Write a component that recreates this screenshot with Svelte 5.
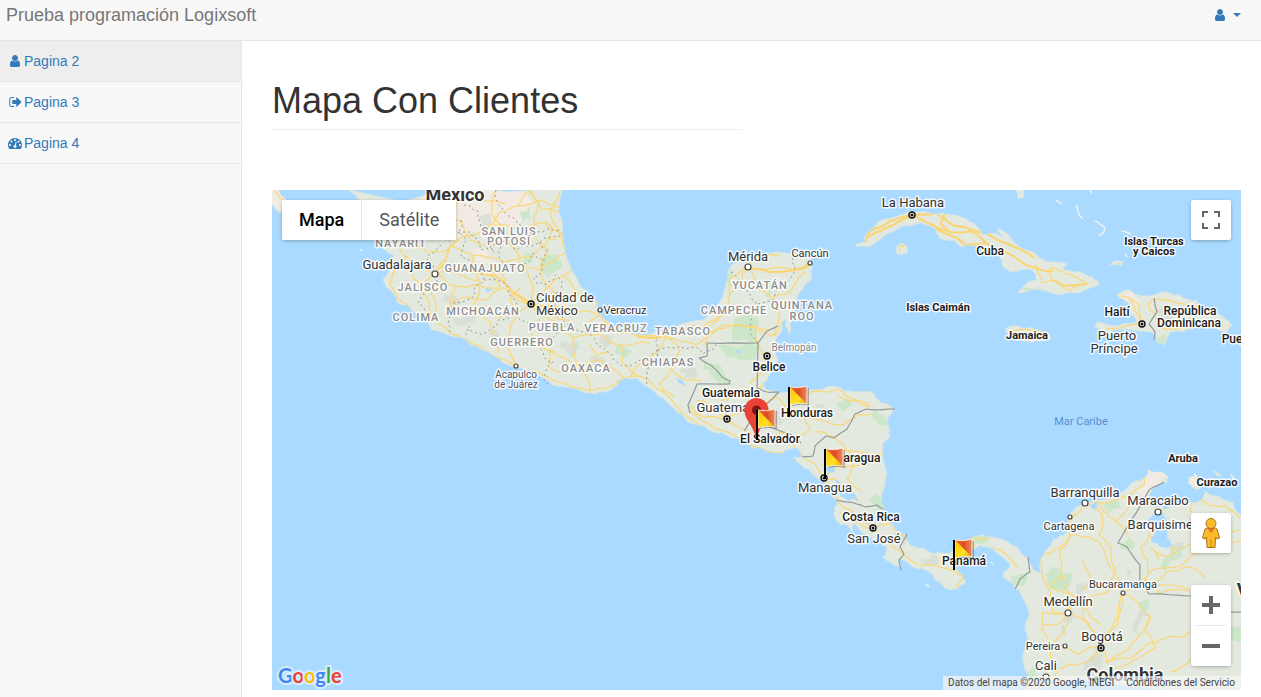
<script>
  const icons = {
    user: { box: '0 0 1280 1536', w: 10, h: 12, d: 'M1280 1271q0 109-62.5 187t-150.5 78h-854q-88 0-150.5-78t-62.5-187q0-85 8.5-160.5t31.5-152 58.5-131 94-89 134.5-34.5q131 128 313 128t313-128q76 0 134.5 34.5t94 89 58.5 131 31.5 152 8.5 160.5zm-256-887q0 159-112.5 271.5t-271.5 112.5-271.5-112.5-112.5-271.5 112.5-271.5 271.5-112.5 271.5 112.5 112.5 271.5z' },
    exit: { box: '0 128 1600 1536', w: 13, h: 12, d: 'M640 1440q0 4 1 20t.5 26.5-3 23.5-10 19.5-20.5 6.5h-320q-119 0-203.5-84.5t-84.5-203.5v-704q0-119 84.5-203.5t203.5-84.5h320q13 0 22.5 9.5t9.5 22.5q0 4 1 20t.5 26.5-3 23.5-10 19.5-20.5 6.5h-320q-66 0-113 47t-47 113v704q0 66 47 113t113 47h312l11.5 1 11.5 3 8 5.5 7 9 2 13.5zm928-544q0 26-19 45l-544 544q-19 19-45 19t-45-19-19-45v-288h-448q-26 0-45-19t-19-45v-384q0-26 19-45t45-19h448v-288q0-26 19-45t45-19 45 19l544 544q19 19 19 45z' },
    gauge: { box: '0 256 1792 1408', w: 14, h: 11, d: 'M384 1152q0-53-37.5-90.5t-90.5-37.5-90.5 37.5-37.5 90.5 37.5 90.5 90.5 37.5 90.5-37.5 37.5-90.5zm192-448q0-53-37.5-90.5t-90.5-37.5-90.5 37.5-37.5 90.5 37.5 90.5 90.5 37.5 90.5-37.5 37.5-90.5zm428 481l101-382q6-26-7.5-48.5t-38.5-29.5-48 6.5-30 39.5l-101 382q-60 5-107 43.5t-63 98.5q-20 77 20 146t117 89 146-20 89-117q16-60-6-117t-72-91zm660-33q0-53-37.5-90.5t-90.5-37.5-90.5 37.5-37.5 90.5 37.5 90.5 90.5 37.5 90.5-37.5 37.5-90.5zm-640-640q0-53-37.5-90.5t-90.5-37.5-90.5 37.5-37.5 90.5 37.5 90.5 90.5 37.5 90.5-37.5 37.5-90.5zm448 192q0-53-37.5-90.5t-90.5-37.5-90.5 37.5-37.5 90.5 37.5 90.5 90.5 37.5 90.5-37.5 37.5-90.5zm320 448q0 261-141 483-19 29-54 29h-1402q-35 0-54-29-141-221-141-483 0-182 71-348t191-286 286-191 348-71 348 71 286 191 191 286 71 348z' }
  };

  const pages = [
    { name: 'Pagina 2', icon: icons.user, active: true },
    { name: 'Pagina 3', icon: icons.exit, active: false },
    { name: 'Pagina 4', icon: icons.gauge, active: false }
  ];

  // Repeatable noise so that lines wander the same way on every load.
  function noise(x, y) {
    const n = Math.sin(x * 12.9898 + y * 78.233) * 43758.5453;
    return (n - Math.floor(n)) * 2 - 1;
  }

  // Turns "x,y x,y ..." into a path whose segments are roughened by midpoint shifts.
  function rough(source, amount, closed) {
    let pts = source.trim().split(/\s+/).map((p) => p.split(',').map(Number));
    if (closed) pts.push(pts[0]);
    for (let pass = 0; pass < 2; pass++) {
      const next = [pts[0]];
      for (let i = 1; i < pts.length; i++) {
        const [ax, ay] = pts[i - 1];
        const [bx, by] = pts[i];
        const len = Math.hypot(bx - ax, by - ay);
        if (len > 5) {
          const shift = noise(ax + bx, ay + by) * amount * len;
          next.push([(ax + bx) / 2 - ((by - ay) / len) * shift, (ay + by) / 2 + ((bx - ax) / len) * shift]);
        }
        next.push([bx, by]);
      }
      pts = next;
    }
    return 'M' + pts.map(([x, y]) => x.toFixed(1) + ' ' + y.toFixed(1)).join('L') + (closed ? 'Z' : '');
  }

  const land = [
    '349,190 360,202 366,220 372,240 385,250 394,255 389,272 383,280 387,288 397,302 415,313 427,320 432,330 449,335 465,339 479,348 499,358 520,368 543,378 553,385 572,388 587,393 603,392 617,385 625,378 637,378 648,387 663,398 677,412 690,423 717,433 737,438 753,448 783,453 792,448 798,448 802,457 793,457 803,467 813,475 827,485 833,497 838,502 834,513 837,522 847,525 852,532 854,523 870,537 887,547 883,557 892,563 900,569 898,560 913,567 930,572 935,580 945,588 957,589 966,582 957,570 953,562 960,555 973,550 980,545 993,548 1003,557 1010,567 1003,577 1015,588 1027,607 1025,627 1028,640 1023,660 1030,677 1026,692 1243,692 1243,518 1233,502 1220,497 1207,492 1197,490 1188,483 1189,477 1196,475 1200,485 1200,492 1183,500 1167,507 1153,507 1148,500 1152,490 1167,482 1168,477 1162,472 1148,470 1143,480 1123,492 1113,497 1097,500 1083,503 1072,512 1068,520 1067,533 1053,540 1046,550 1040,560 1042,573 1033,570 1028,558 1017,547 1003,540 990,537 973,537 962,546 950,553 933,554 923,548 910,545 905,535 893,525 885,515 883,507 882,493 885,467 883,443 890,437 887,420 893,409 880,402 873,393 853,392 837,387 827,387 807,390 788,392 777,393 767,390 763,383 773,370 778,360 775,343 782,330 785,318 789,334 790,313 797,297 807,283 812,267 810,257 793,254 780,252 760,255 740,260 730,267 728,280 723,297 715,310 703,320 680,325 667,329 647,335 630,332 613,325 602,317 597,302 577,278 570,265 565,248 562,235 562,188',
    '270,188 270,202 280,213 290,208 285,198 277,188',
    '855,245 867,247 883,237 900,227 918,223 936,229 940,238 955,240 963,247 977,247 1000,257 1002,265 1010,272 1033,270 1037,280 1027,283 1018,293 1045,291 1070,292 1090,288 1099,285 1092,277 1080,272 1063,270 1067,264 1050,262 1040,258 1027,250 1007,238 983,235 970,222 950,215 918,212 900,215 877,223 867,233 865,242',
    '897,246 902,243 907,247 907,253 897,254',
    '1005,329 1014,326 1030,327 1048,333 1051,338 1040,341 1024,341 1009,336',
    '1117,295 1130,290 1155,295 1180,295 1197,300 1197,305 1213,312 1232,325 1227,332 1200,328 1183,332 1170,332 1165,345 1158,343 1152,332 1133,330 1110,332 1095,327 1097,322 1120,325 1137,322 1130,312 1128,302',
    '808,280 812,277 809,282 806,283',
    '1110,265 1116,261 1123,262 1121,266',
    '1016,189 1023,189 1023,198 1018,198',
    '997,229 1003,231 1012,239 1018,246 1008,239 1000,233',
    '1213,470 1217,472 1221,477 1216,474',
    '1240,338 1243,338 1243,346 1240,346'
  ].map((s) => rough(s, 0.14, true));

  const sand = [
    '420,188 520,188 534,205 520,222 498,228 485,240 470,232 458,240 440,225 420,205',
    '268,188 278,188 284,203 280,212 270,202',
    '1117,295 1130,291 1140,301 1137,310 1120,299',
    '1143,480 1148,470 1162,472 1168,477 1152,488 1144,496 1136,492',
    '470,250 486,248 492,262 478,268',
    '1189,477 1196,475 1199,488 1189,484'
  ].map((s) => rough(s, 0.2, true));

  const parks = [
    '735,318 757,317 758,343 733,342', '718,345 757,345 755,360 738,360 725,354',
    '711,362 722,373 735,384 727,385 712,376', '918,232 938,228 938,239 924,235',
    '1020,290 1040,287 1047,291 1030,293', '1045,575 1055,567 1071,573 1066,590 1047,582',
    '1103,505 1118,499 1123,508 1110,513', '1010,575 1027,572 1025,585 1012,586',
    '868,500 876,494 886,505 876,510', '540,262 556,255 562,268 548,278',
    '524,254 531,253 532,263 523,262', '765,280 772,280 770,298 765,296',
    '872,408 884,417 888,426 876,421', '400,215 412,208 420,220 408,232',
    '1161,564 1185,545 1182,556 1166,571', '1119,545 1128,535 1134,548 1124,550',
    '1216,625 1243,625 1243,644 1216,642', '1139,602 1150,600 1148,610 1140,610',
    '728,275 734,270 733,290 728,284', '974,538 990,537 985,543 975,543',
    '1155,343 1165,333 1165,344', '1027,672 1035,662 1042,682 1030,684',
    '617,345 632,350 626,358 615,354', '705,362 713,372 704,370',
    '1112,264 1121,263 1118,266', '520,212 532,206 532,219 523,221',
    '706,366 716,364 730,380 718,380', '838,402 846,398 852,406 842,412'
  ].map((s) => rough(s, 0.22, true));

  const relief = [
    '440,300 452,295 461,303 452,312', '452,318 466,313 475,321 462,325',
    '489,333 498,329 507,339 500,343', '560,342 578,340 586,350 571,357',
    '590,358 604,354 612,364 601,370', '600,337 610,335 614,344 606,348',
    '478,220 490,214 493,226 482,230', '548,295 557,290 566,300 556,304',
    '765,415 777,409 784,419 773,425', '812,410 824,404 834,412 824,419',
    '861,453 869,446 873,458 865,461', '890,540 902,530 907,541 899,546',
    '920,558 932,554 940,562 928,565', '1060,628 1068,610 1074,615 1066,636',
    '1073,600 1080,582 1086,588 1077,604', '1085,670 1095,649 1104,655 1093,676',
    '1117,585 1126,565 1131,571 1123,590', '1133,630 1145,610 1150,616 1138,635',
    '1163,559 1184,542 1178,555 1168,565', '1188,523 1196,519 1196,527 1189,528',
    '1150,312 1166,303 1178,314 1162,319', '680,370 690,366 695,378 685,378'
  ].map((s) => rough(s, 0.35, true));

  const lakes = [
    '1148,520 1153,515 1162,512 1166,528 1172,545 1160,547 1151,541 1155,530',
    '831,478 844,486 855,494 859,501 847,500 838,490', '824,466 832,464 835,471 828,473',
    '1090,505 1096,500 1098,508 1092,509', '675,377 686,386 679,383',
    '485,289 493,290 488,293', '736,350 742,352 738,354',
    '1200,489 1206,492 1200,500 1180,505 1167,509 1155,508 1170,503'
  ].map((s) => rough(s, 0.2, true));

  const roads = [
    '349,190 378,220 398,243 408,258 435,274 470,269 503,274 531,305',
    '435,274 420,290 432,318 450,333 481,347 516,367 555,381 590,391 620,380 640,376 670,398 700,425 750,445 790,450',
    '435,274 450,246 445,222 460,190', '435,274 456,240 490,225 520,228 545,222 562,236',
    '408,256 395,270 390,285 412,310', '412,276 430,290 436,312 428,321',
    '450,246 472,255 503,262 531,258 548,240 561,235', '472,255 480,280 474,303 490,322 499,353',
    '435,274 452,286 478,284 504,288 531,305 560,306 576,312 598,314',
    '531,305 512,322 508,345 516,365', '531,305 532,284 520,262 505,240 492,214 496,190',
    '531,305 546,289 563,276 573,270', '546,289 540,269 548,250 533,232 538,205 529,190',
    '561,235 550,213 560,191', '562,235 572,268 596,302 603,320 640,338 667,337 702,328 726,308 729,280 748,267',
    '531,305 555,322 573,338 577,365 590,391', '573,338 600,334 622,345 650,343',
    '577,365 550,351 530,340 512,338', '577,365 600,360 618,372 625,378',
    '622,345 622,362 640,376', '667,337 657,352 638,365 630,377', '667,337 680,350 672,368 660,384 674,397',
    '667,337 696,345 710,335 730,326 755,327 770,330', '671,368 688,380 702,381',
    '708,335 726,325 742,326 758,328 771,336 783,322', '748,267 765,270 795,270 810,265',
    '748,267 740,283 728,299', '748,267 757,288 771,297 784,295 805,272', '771,297 779,311 774,336',
    '748,267 757,256 780,255', '726,312 710,326 692,325', '757,327 764,357 767,367 750,383',
    '727,418 704,417 690,405', '727,418 750,410 764,404 776,397', '727,418 745,430 757,439',
    '727,418 722,400 741,391 757,389 765,382', '690,412 708,423 737,437',
    '757,439 782,432 793,444 814,463 824,477 836,497 855,515 873,528 890,544 911,561 940,567 953,571',
    '776,397 786,410 804,414 810,429 794,444', '786,398 809,393 828,392 840,390 853,399 870,407',
    '804,414 821,420 843,425 858,415 872,414', '814,432 834,437 847,451 856,457 847,478 862,491',
    '837,453 863,452 885,455', '824,477 836,466 854,466 870,459', '824,477 836,479 852,491 858,501',
    '873,528 889,523 903,536 911,545', '873,528 854,520 840,513', '957,571 958,556 977,548 995,548 1012,561 1018,568',
    '953,571 964,577 956,587', '975,546 972,537 988,538',
    '1085,503 1070,520 1070,535 1057,549 1043,555 1042,569 1047,586 1053,612 1068,613',
    '1070,535 1092,538 1103,548 1109,565 1122,592 1120,613 1101,646',
    '1085,503 1115,500 1144,485 1148,471', '1085,503 1102,514 1099,535 1111,547 1116,570 1110,589',
    '1070,535 1060,550 1062,575 1070,596 1068,613 1062,635 1047,670 1044,692',
    '1068,613 1085,622 1101,646 1078,654 1063,646', '1101,646 1107,663 1132,658 1149,643 1166,638 1184,637 1212,624 1225,623',
    '1063,646 1050,646 1042,629 1043,612 1068,613', '1122,592 1136,601 1150,617 1140,635 1107,663',
    '1122,592 1142,582 1150,571 1181,566 1209,547 1243,539', '1142,582 1165,585 1189,589',
    '1158,511 1149,535 1141,548 1148,575', '1158,511 1176,501 1196,495 1211,506 1225,505 1240,519',
    '1149,535 1175,550 1205,530 1215,513', '1144,578 1160,593 1190,591', '1062,575 1050,587 1068,592 1084,607 1101,625',
    '1116,522 1103,510 1096,500', '1101,646 1092,630 1083,618 1086,595', '1068,613 1059,624 1043,625',
    '1101,646 1118,624 1122,592', '1152,617 1145,631 1155,648 1128,664 1095,680 1060,680',
    '1205,578 1190,567 1166,572 1145,592', '1101,646 1080,664 1058,669 1047,692',
    '1117,296 1138,304 1142,324', '1142,324 1126,326 1105,329', '1157,325 1178,329 1200,327 1223,326',
    '1157,325 1148,304 1156,299 1183,304 1195,307', '1178,329 1190,317 1193,303', '1008,331 1028,329 1047,335 1026,339 1008,331',
    '1142,324 1130,299', '1036,264 1042,283 1052,280 1050,268 1066,274 1088,284 1070,290 1054,280',
    '274,190 283,200 283,211', '531,190 541,209 560,212', '424,190 436,213 462,222', '562,208 540,200 518,206',
    '870,407 859,402 838,396', '899,253 900,246 906,245', '480,280 455,272 440,263',
    '462,222 470,240 486,246 505,240', '490,225 500,212 518,206 529,190', '503,262 492,276 500,290 486,300 460,298 448,310',
    '520,262 538,270 552,262 566,252', '520,288 510,300 515,312 500,318 486,312', '548,285 556,296 548,306 556,318 570,322',
    '563,276 575,290 590,300', '540,318 530,330 540,345 556,352', '460,240 444,252 428,252 412,245',
    '456,286 450,300 462,312 478,308', '598,334 590,322 600,315', '545,222 552,232 548,240', '505,204 482,200 470,190',
    '550,351 548,366 560,372 577,365', '590,345 596,356 608,352', '708,335 704,345', '696,400 708,405 727,418',
    '1196,495 1190,510 1200,522 1215,525 1240,530', '1160,560 1150,548 1165,556 1178,552', '1068,613 1078,600 1092,596 1110,589',
    '1083,560 1090,575 1084,590', '1128,535 1116,522 1128,508 1140,496', '1205,640 1190,660 1170,672'
  ].map((s) => rough(s, 0.12, false));

  const highways = [
    '868,237 882,230 898,222 912,215 930,224 950,232 970,231 984,241 1000,250 1020,261 1037,269 1053,271',
    '866,242 870,231 890,221 912,215 937,213 955,226 985,233 1008,244 1034,258',
    '936,229 955,237 965,245 987,243', '748,267 769,272 795,270 810,264', '1052,280 1064,286 1086,284',
    '440,267 468,270 496,276 531,303 556,307 576,311', '604,322 621,332 648,338 667,336', '945,213 940,224 950,232'
  ].map((s) => rough(s, 0.06, false));

  const borders = [
    '707,343 758,343 766,332 778,326', '707,343 707,356 699,358 712,366 722,377 730,381 729,384 697,384 688,405 690,413',
    '758,343 757,388 767,392 779,392', '779,392 765,405 752,418 744,431', '752,418 766,425 790,434 801,443',
    '802,457 813,456 815,446 826,436 834,438 847,429 855,414 866,409 895,409', '836,500 854,503 866,507 877,505 883,509',
    '907,534 900,547 904,554 899,560 901,570', '1028,557 1030,572 1020,579 1015,589',
    '1164,482 1150,489 1143,501 1130,523 1118,543 1127,547 1140,565 1140,581 1149,594 1172,595 1194,596 1210,599 1222,613 1243,612',
    '1154,298 1155,305 1157,312 1149,324 1155,332 1154,340'
  ].map((s) => rough(s, 0.03, false));

  const stateLines = [
    '430,190 441,207 430,222 449,238 470,232 481,250 500,242 517,250 540,242 560,236',
    '461,220 467,240 461,257 478,269 484,280 475,295 455,302 449,320 452,334',
    '484,280 500,281 512,297 515,315 498,320 482,334 469,326 465,338',
    '515,315 530,325 543,322 550,338 539,348 553,362 549,385',
    '496,190 502,208 515,219 537,232 561,230', '540,242 544,260 533,278 545,285 555,275 562,290 552,298 561,311 570,327',
    '553,338 570,327 584,332 604,348 614,360 650,362 658,350', '658,335 659,360 647,374 646,386',
    '650,362 675,348 696,347 703,354 716,344', '758,343 758,304 743,288 730,270', '758,304 781,285 795,266 796,253',
    '441,245 427,260 439,286 425,290 418,303 427,318', '500,242 501,260 522,264 532,253 544,260', '464,205 478,211 484,235 494,252'
  ].map((s) => rough(s, 0.25, false));

  const islets = [
    '1056,200 1062,204', '1076,205 1078,212 1083,219', '1095,221 1105,228 1104,232 1099,236', '1122,231 1131,234', '1090,190 1092,194', '1125,254 1127,257', '360,249 362,251', '1194,474 1197,477', '1231,474 1234,479', '926,584 929,587', '991,562 993,564'
  ].map((s) => rough(s, 0.1, false));

  const labels = [
    ['country large', 'México', 455, 201], ['state', 'NAYARIT', 401, 247], ['state', 'SAN LUIS', 509, 235],
    ['state', 'POTOSÍ', 509, 245], ['state', 'GUANAJUATO', 485, 272], ['state', 'JALISCO', 423, 291],
    ['state', 'COLIMA', 416, 321], ['state', 'MICHOACÁN', 483, 315], ['state', 'GUERRERO', 522, 346],
    ['state', 'PUEBLA', 552, 331], ['state', 'VERACRUZ', 616, 332], ['state', 'TABASCO', 683, 335],
    ['state', 'CHIAPAS', 668, 366], ['state', 'OAXACA', 586, 372], ['state', 'YUCATÁN', 760, 289],
    ['state', 'CAMPECHE', 734, 314], ['state', 'QUINTANA', 802, 309], ['state', 'ROO', 802, 320],
    ['city', 'Guadalajara', 397, 269], ['city', 'Ciudad de', 565, 302], ['city', 'México', 557, 315],
    ['town', 'Veracruz', 625, 314], ['town small', 'Acapulco', 516, 378], ['town small', 'de Juárez', 516, 388],
    ['city', 'Mérida', 748, 261], ['town', 'Cancún', 810, 257], ['town small faint', 'Belmopán', 794, 351],
    ['country', 'Belice', 769, 371], ['country', 'Guatemala', 731, 397], ['city', 'Guatemala', 728, 412],
    ['country', 'Honduras', 807, 417], ['country', 'El Salvador', 770, 443], ['country', 'Nicaragua', 853, 462],
    ['city', 'Managua', 825, 492], ['country', 'Costa Rica', 871, 521], ['city', 'San José', 874, 543],
    ['country', 'Panamá', 964, 565], ['city', 'La Habana', 913, 207], ['country', 'Cuba', 990, 255],
    ['country minor', 'Islas Caimán', 938, 311], ['country minor', 'Jamaica', 1027, 339], ['country minor', 'Islas Turcas', 1154, 245],
    ['country minor', 'y Caicos', 1154, 255], ['country', 'Haití', 1117, 316], ['country', 'República', 1190, 315],
    ['country', 'Dominicana', 1189, 327], ['city', 'Puerto', 1117, 340], ['city', 'Príncipe', 1114, 353],
    ['sea', 'Mar Caribe', 1081, 425], ['country minor', 'Aruba', 1183, 462], ['country minor', 'Curazao', 1217, 486],
    ['city', 'Barranquilla', 1085, 497], ['city', 'Maracaibo', 1158, 505], ['town', 'Cartagena', 1069, 530],
    ['city', 'Barquisimeto', 1166, 529], ['town', 'Bucaramanga', 1123, 588], ['city', 'Medellín', 1068, 606],
    ['town', 'Pereira', 1043, 650], ['city', 'Bogotá', 1102, 641], ['city', 'Cali', 1046, 670],
    ['country large', 'Colombia', 1125, 681], ['country', 'Puerto Rico', 1253, 343], ['country large', 'Venezuela', 1279, 596]
  ];

  const towns = [[435, 274, 3], [748, 267, 3], [810, 263, 2], [600, 310, 2], [516, 366, 2], [1085, 503, 3], [1158, 512, 3], [1070, 517, 2], [1123, 593, 2], [1068, 613, 3], [1065, 646, 2], [1046, 677, 3]];
  const capitals = [[531, 304], [767, 356], [727, 419], [912, 215], [1142, 324], [824, 478], [873, 528], [1101, 648]];
  const flags = [[789, 387], [757, 410], [825, 449], [954, 540]];
</script>

{#snippet glyph(icon)}
  <svg viewBox={icon.box} width={icon.w} height={icon.h} aria-hidden="true"><path fill="currentColor" d={icon.d} /></svg>
{/snippet}

<div class="layout">
  <header>
    <a class="brand" href="#inicio">Prueba programación Logixsoft</a>
    <button class="account" type="button" aria-label="Cuenta" aria-haspopup="true">
      {@render glyph(icons.user)}
      <span class="caret"></span>
    </button>
  </header>

  <div class="body">
    <nav>
      <ul>
        {#each pages as page}
          <li>
            <a href="#{page.name}" class:active={page.active}>
              <span class="icon">{@render glyph(page.icon)}</span>{page.name}
            </a>
          </li>
        {/each}
      </ul>
    </nav>

    <main>
      <h1>Mapa Con Clientes</h1>

      <section class="map" aria-label="Mapa Con Clientes">
        <svg class="tiles" viewBox="272 190 969 500" preserveAspectRatio="xMidYMid slice">
          <defs>
            <clipPath id="ground">{#each land as d}<path {d} />{/each}</clipPath>
            <linearGradient id="yellow" x1="0" y1="0" x2="1" y2="1">
              <stop offset="0" stop-color="#ffbf00" /><stop offset=".6" stop-color="#ffe11f" /><stop offset="1" stop-color="#e8a400" />
            </linearGradient>
            <linearGradient id="red" x1="0" y1="0" x2="1" y2="0">
              <stop offset="0" stop-color="#ee7044" /><stop offset=".5" stop-color="#dc4b22" /><stop offset="1" stop-color="#f08a60" />
            </linearGradient>
          </defs>

          <g class="land">{#each land as d}<path {d} />{/each}</g>
          <g clip-path="url(#ground)">
            <g class="sand">{#each sand as d}<path {d} />{/each}</g>
            <g class="relief">{#each relief as d}<path {d} />{/each}</g>
            <g class="parks">{#each parks as d}<path {d} />{/each}</g>
            <g class="roads">{#each roads as d}<path {d} />{/each}</g>
            <g class="highways">{#each highways as d}<path {d} />{/each}</g>
          </g>
          <g class="lakes">{#each lakes as d}<path {d} />{/each}</g>
          <g class="states">{#each stateLines as d}<path {d} />{/each}</g>
          <g class="borders">{#each borders as d}<path {d} />{/each}</g>
          <g class="islets">{#each islets as d}<path {d} />{/each}</g>

          {#each towns as [x, y, r]}
            <circle class="town-dot" cx={x} cy={y} r={r} />
          {/each}
          {#each labels as [kind, text, x, y]}
            <text class={kind} {x} {y}>{text}</text>
          {/each}
          {#each capitals as [x, y]}
            <circle class="capital-ring" cx={x} cy={y} r="3" />
            <circle cx={x} cy={y} r="1.5" fill="#111" />
          {/each}

          <g transform="translate(756.5 398)">
            <path fill="#ea4335" d="M0 0a12 12 0 0 1 12 12c0 4-1 7-3.5 11C4 30 1.800 34 0 42c-1.800-8-4-12-8.500-19C-11 19-12 16-12 12A12 12 0 0 1 0 0z" />
            <circle cx="0" cy="12" r="4.500" fill="#811411" />
          </g>
          {#each flags as [x, y]}
            <g transform="translate({x} {y})">
              <path d="M3 2q8 2 17-1v18q-8-2-17 0z" fill="#000" opacity=".28" />
              <path d="M1 0q9 2 17-1v18q-9-2-17 1z" fill="url(#yellow)" />
              <path d="M1 0q9 2 17-1v18z" fill="url(#red)" />
              <path d="M1 0q9 2 17-1v18q-9-2-17 1z" fill="none" stroke="#fff" stroke-opacity=".75" />
              <path d="M0 0v30" stroke="#000" stroke-width="2" />
            </g>
          {/each}
        </svg>

        <div class="types">
          <button type="button" class="selected">Mapa</button>
          <button type="button">Satélite</button>
        </div>

        <button class="control fullscreen" type="button" aria-label="Pantalla completa">
          <svg viewBox="0 0 18 18" width="18" height="18"><path fill="#666" d="M0 0v6h2V2h4V0zM12 0v2h4v4h2V0zM16 16h-4v2h6v-6h-2zM2 12H0v6h6v-2H2z" /></svg>
        </button>

        <div class="corner">
          <button class="control" type="button" aria-label="Street View">
            <svg viewBox="0 0 18 30" width="18" height="30">
              <path fill="#fbbc2c" stroke="#a8741a" d="M5 10h8.500l1.500 1 2.500 9-2.500 1-1.500-2-.5 10.500H5L4.500 19 3 21 .5 20 3 11z" />
              <path fill="#e2762b" d="M5 10h8L9 15z" />
              <path stroke="#c98a1f" d="M9 21v8" />
              <circle cx="9" cy="5.500" r="5" fill="#fbbc2c" stroke="#a8741a" />
            </svg>
          </button>
          <div class="zoom">
            <button type="button" aria-label="Acercar"><svg viewBox="0 0 18 18" width="18" height="18"><path fill="#666" d="M7 0h4v7h7v4h-7v7H7v-7H0V7h7z" /></svg></button>
            <button type="button" aria-label="Alejar"><svg viewBox="0 0 18 18" width="18" height="18"><path fill="#666" d="M0 7h18v4H0z" /></svg></button>
          </div>
        </div>

        <a class="logo" href="#google" aria-label="Google">
          <svg width="70" height="28">
            <text x="2" y="21"><tspan fill="#4285f4">G</tspan><tspan fill="#ea4335">o</tspan><tspan fill="#fbbc05">o</tspan><tspan fill="#4285f4">g</tspan><tspan fill="#34a853">l</tspan><tspan fill="#ea4335">e</tspan></text>
          </svg>
        </a>

        <footer>
          <span>Datos del mapa ©2020 Google, INEGI</span>
          <a href="#condiciones">Condiciones del Servicio</a>
        </footer>
      </section>
    </main>
  </div>
</div>

<style>
  :global(body) { overflow: hidden; background: #fff; }
  * { box-sizing: border-box; }
  .layout {
    display: flex;
    flex-direction: column;
    min-height: 100vh;
    font: 14px/20px "Liberation Sans", Arial, sans-serif;
    color: #333;
  }
  a { text-decoration: none; color: #337ab7; }
  button { border: 0; padding: 0; background: #fff; cursor: pointer; font: inherit; }
  svg { display: block; }

  header {
    display: flex;
    justify-content: space-between;
    align-items: flex-start;
    height: 41px;
    padding: 5px 20px 0 6px;
    background: #f8f8f8;
    border-bottom: 1px solid #e7e7e7;
  }
  .brand { font-size: 18px; color: #777; }
  .account { display: flex; align-items: center; gap: 8px; height: 20px; background: none; color: #337ab7; }
  .caret { border: 4px solid transparent; border-top-color: currentColor; border-bottom: 0; }

  .body { display: flex; flex: 1; }
  nav { flex: 0 0 242px; background: #f8f8f8; border-right: 1px solid #e7e7e7; }
  ul { list-style: none; margin: 0; padding: 0; }
  li { border-bottom: 1px solid #e7e7e7; }
  li a { display: flex; align-items: center; gap: 2px; padding: 10px 8px; }
  li a.active { background: #eee; }
  .icon { display: flex; justify-content: center; width: 14px; }

  main { flex: 1; min-width: 0; padding: 40px 20px 0 30px; }
  h1 {
    width: calc(50% - 15px);
    margin: 0 0 60px;
    padding-bottom: 8px;
    font-size: 36px;
    font-weight: 400;
    line-height: 40px;
    border-bottom: 1px solid #eee;
  }

  .map { position: relative; height: 500px; overflow: hidden; background: #aadaff; font-family: Roboto, sans-serif; }
  .tiles { width: 100%; height: 100%; }
  .tiles path { stroke-linejoin: round; }
  .land path { fill: #e3e9de; stroke: #d7e6e3; }
  .sand { fill: #f1ebe3; }
  .relief { fill: #d2d9cf; opacity: .6; }
  .parks { fill: #cbe6c9; }
  .roads { fill: none; stroke: #fad777; stroke-width: 1.2; }
  .highways { fill: none; stroke: #fad471; stroke-width: 2; }
  .lakes { fill: #aadaff; }
  .states { fill: none; stroke: #999; stroke-dasharray: 2 3; }
  .borders { fill: none; stroke: #929b9b; stroke-width: 1.2; }
  .islets { fill: none; stroke: #eef4ee; stroke-width: 1.5; }
  .town-dot { fill: #fff; stroke: #444; stroke-width: 1.2; }
  .capital-ring { fill: #fff; stroke: #111; stroke-width: 1.4; }

  .tiles text { text-anchor: middle; paint-order: stroke; stroke: #fff; stroke-opacity: .85; stroke-width: 3px; stroke-linejoin: round; fill: #333; }
  .tiles .country { font-size: 12px; font-weight: 500; fill: #1c1c1c; }
  .tiles .minor { font-size: 11px; font-weight: 700; }
  .tiles .large { font-size: 18px; font-weight: 700; fill: #333; }
  .tiles .city { font-size: 13px; }
  .tiles .town { font-size: 11px; }
  .tiles .small { font-size: 10px; fill: #555; }
  .tiles .faint { fill: #888; }
  .tiles .state { font-size: 11px; font-weight: 500; letter-spacing: 1px; fill: #8d8d8d; }
  .tiles .sea { font-size: 11px; fill: #5b8fd0; stroke: none; }

  .types, .control, .zoom { border-radius: 2px; background: #fff; box-shadow: 0 1px 4px -1px rgba(0, 0, 0, .4); }
  .types { position: absolute; top: 10px; left: 10px; display: flex; overflow: hidden; }
  .types button { height: 40px; padding: 0 17px; font-size: 18px; color: #565656; }
  .types .selected { font-weight: 500; color: #000; border-right: 1px solid #e6e6e6; }
  .control, .zoom button { display: grid; place-items: center; width: 40px; height: 40px; }
  .fullscreen { position: absolute; top: 10px; right: 10px; }
  .corner { position: absolute; right: 10px; bottom: 24px; display: grid; gap: 32px; }
  .zoom { display: grid; }
  .zoom button { background: none; }
  .zoom button + button { position: relative; height: 41px; }
  .zoom button + button::before { content: ""; position: absolute; top: 0; left: 5px; right: 5px; height: 1px; background: #e6e6e6; }

  .logo { position: absolute; left: 4px; bottom: 0; }
  .logo text { font: 700 20px Lato, sans-serif; paint-order: stroke; stroke: #d8edfd; stroke-width: 4px; stroke-linejoin: round; }
  footer {
    position: absolute;
    right: 0;
    bottom: 0;
    display: flex;
    gap: 12px;
    padding: 0 6px 0 5px;
    font-size: 10px;
    line-height: 14px;
    background: rgba(245, 245, 245, .7);
    color: #444;
  }
  footer a { color: #444; }
</style>
